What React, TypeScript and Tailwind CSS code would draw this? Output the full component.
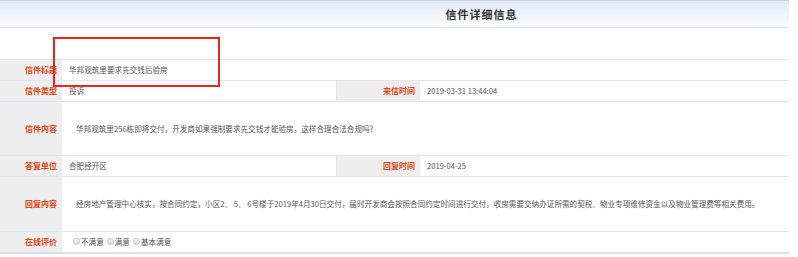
import React from 'react';

const font = { fontFamily: '"Noto Sans CJK SC", "Noto Sans", sans-serif' };

const Label = ({ children, wide }: { children: React.ReactNode; wide?: boolean }) => (
  <div
    className={`${wide ? 'w-[84px] border-l border-[#dfe6ef]' : 'w-[62px]'} shrink-0 bg-[#eeeeee] flex items-center justify-end pr-[5px] text-[8px] font-bold text-[#e4450f]`}
  >
    {children}
  </div>
);

const Value = ({ children, className = '' }: { children?: React.ReactNode; className?: string }) => (
  <div className={`flex items-center pl-[7px] text-[7.6px] text-[#555] bg-white whitespace-nowrap ${className}`}>{children}</div>
);

const Radio = ({ label }: { label: string }) => (
  <span className="flex items-center mr-[3px]">
    <span className="w-[7px] h-[7px] rounded-full border border-[#c4c4c4] bg-gradient-to-b from-[#f4f4f4] to-[#dcdcdc] mr-[1px]" />
    {label}
  </span>
);

export default function App() {
  const rows = 'flex border-b border-[#dfe6ef]';
  return (
    <div className="w-[798px] h-[257px] bg-white overflow-hidden" style={font}>
      <div className="w-[789px] relative">
        <div className="h-[28px] border-t border-[#c9d6e6] border-b border-b-[#dbe4ee] bg-gradient-to-b from-[#e2ebf7] to-[#fbfcfe] flex items-center justify-center pl-[174px] text-[11px] font-bold text-[#333] tracking-[1px]">
          信件详细信息
        </div>
        <div className="h-[32px] border-b border-[#dfe6ef]" />
        <div className={`${rows} h-[21px]`}>
          <Label>信件标题</Label>
          <Value className="flex-1">华邦观筑里要求先交钱后验房</Value>
        </div>
        <div className={`${rows} h-[21px]`}>
          <Label>信件类型</Label>
          <Value className="w-[274px]">投诉</Value>
          <Label wide>来信时间</Label>
          <Value className="flex-1">2019-03-31 13:44:04</Value>
        </div>
        <div className={`${rows} h-[54px]`}>
          <Label>信件内容</Label>
          <Value className="flex-1 pl-[14px]">华邦观筑里256栋即将交付，开发商如果强制要求先交钱才能验房，这样合理合法合规吗？</Value>
        </div>
        <div className={`${rows} h-[21px]`}>
          <Label>答复单位</Label>
          <Value className="w-[274px]">合肥经开区</Value>
          <Label wide>回复时间</Label>
          <Value className="flex-1">2019-04-25</Value>
        </div>
        <div className={`${rows} h-[55px]`}>
          <Label>回复内容</Label>
          <Value className="flex-1 pl-[14px]">
            经房地产管理中心核实，按合同约定，小区2、 5、 6号楼于2019年4月30日交付，届时开发商会按照合同约定时间进行交付，收房需要交纳办证所需的契税、物业专项维修资金以及物业管理费等相关费用。
          </Value>
        </div>
        <div className="flex h-[22px] border-b-2 border-[#d3dfeb]">
          <Label>在线评价</Label>
          <Value className="flex-1 pl-[11px]">
            <Radio label="不满意" />
            <Radio label="满意" />
            <Radio label="基本满意" />
          </Value>
        </div>
        <div className="absolute left-[53px] top-[37px] w-[167px] h-[50px] border-2 border-[#f5221b]" />
      </div>
    </div>
  );
}
